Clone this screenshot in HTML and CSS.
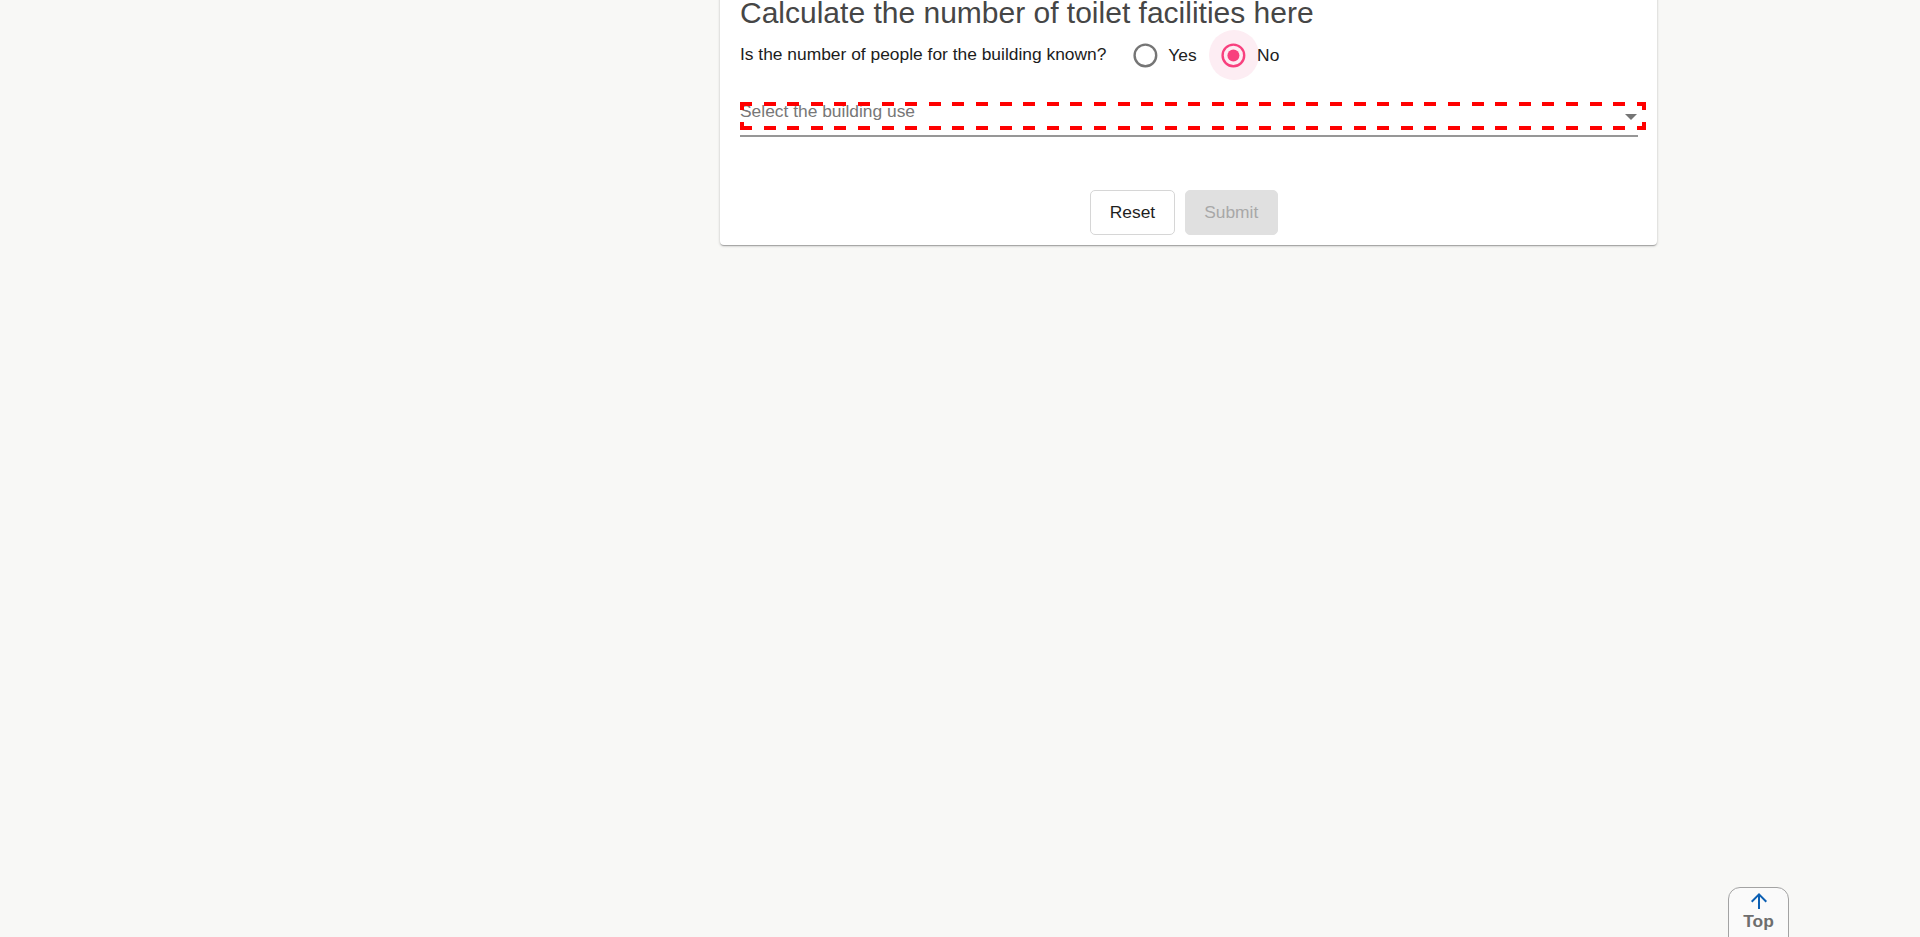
FILE: index.html
```html
<!DOCTYPE html>
<html lang="en">
<head>
<meta charset="utf-8">
<title>Toilet facilities calculator</title>
<link rel="stylesheet" href="styles.css">
</head>
<body>
<div class="layout">
  <div class="side"></div>
  <section class="card">
    <h2 class="title">Calculate the number of toilet facilities here</h2>
    <div class="question-row">
      <span class="question">Is the number of people for the building known?</span>
      <div class="radio-group">
        <label class="radio-option">
          <span class="radio-btn">
            <svg class="radio-icon" viewBox="0 0 24 24" width="28.8" height="28.8"><circle cx="12" cy="12" r="9" fill="none" stroke="#757575" stroke-width="2"/></svg>
          </span>
          <span class="radio-label">Yes</span>
        </label>
        <label class="radio-option">
          <span class="radio-btn checked">
            <svg class="radio-icon" viewBox="0 0 24 24" width="28.8" height="28.8"><circle cx="12" cy="12" r="9" fill="none" stroke="#f8407e" stroke-width="2"/><circle cx="12" cy="12" r="5" fill="#f8407e"/></svg>
          </span>
          <span class="radio-label">No</span>
        </label>
      </div>
    </div>
    <div class="select-field">
      <span class="select-label">Select the building use</span>
      <div class="select-box">
        <svg class="select-arrow" viewBox="0 0 12 6" width="12" height="6"><path d="M0 0 L6 6 L12 0 Z" fill="#757575"/></svg>
      </div>
    </div>
    <div class="actions">
      <button class="btn btn-reset" type="button">Reset</button>
      <button class="btn btn-submit" type="button" disabled>Submit</button>
    </div>
  </section>
</div>
<button class="top-btn" type="button">
  <svg class="top-arrow" viewBox="4 4 16 16" width="16" height="16"><path d="M4 12l1.41 1.41L11 7.83V20h2V7.83l5.58 5.59L20 12l-8-8-8 8z" fill="#0b5fb3"/></svg>
  <span class="top-text">Top</span>
</button>
</body>
</html>
```

FILE: styles.css
```css
html, body {
  margin: 0;
  padding: 0;
  background: #f8f8f6;
  font-family: "Liberation Sans", Arial, sans-serif;
  height: 100%;
  overflow: hidden;
}

.layout {
  display: flex;
  align-items: flex-start;
}

.side {
  flex: 0 0 720px;
}

.card {
  flex: 0 0 937px;
  box-sizing: border-box;
  margin-top: -20px;
  padding: 16px 19px 10px 20px;
  background: #fff;
  border-radius: 4px;
  box-shadow: 0 1px 3px rgba(0,0,0,0.2), 0 1px 1px rgba(0,0,0,0.14), 0 2px 1px -1px rgba(0,0,0,0.12);
}

.title {
  margin: 0;
  font-size: 30px;
  line-height: 34px;
  font-weight: 400;
  color: #464646;
}

.question-row {
  display: flex;
  align-items: center;
  height: 50.4px;
}

.question {
  font-size: 17.4px;
  line-height: 20px;
  color: #1c1c1c;
  margin-bottom: 2px;
}

.radio-group {
  display: flex;
  align-items: center;
  margin-left: 13.5px;
  gap: 12px;
}

.radio-option {
  display: flex;
  align-items: center;
  cursor: pointer;
}

.radio-btn {
  width: 50.4px;
  height: 50.4px;
  border-radius: 50%;
  display: flex;
  align-items: center;
  justify-content: center;
}

.radio-btn.checked {
  background: #fdedf3;
}

.radio-icon {
  display: block;
}

.radio-label {
  font-size: 17.4px;
  line-height: 20px;
  color: #202020;
  margin-left: -2px;
}

.select-field {
  position: relative;
  margin-top: 22px;
  padding-top: 4px;
  padding-bottom: 9px;
  border-bottom: 2px solid #979797;
}

.select-label {
  position: absolute;
  left: 0;
  top: -1px;
  font-size: 17.4px;
  line-height: 20px;
  color: #777;
}

.select-box {
  position: relative;
  height: 20px;
  margin: 0 -4px 0 4px;
  display: flex;
  align-items: center;
  justify-content: flex-end;
  padding-right: 5px;
}

.select-box::after {
  content: "";
  position: absolute;
  top: -4px;
  left: -4px;
  right: -4px;
  bottom: -4px;
  pointer-events: none;
  background:
    repeating-linear-gradient(90deg, #ff0000 0 12px, transparent 12px 23.6px) left top / 100% 4px no-repeat,
    repeating-linear-gradient(90deg, #ff0000 0 12px, transparent 12px 23.6px) left bottom / 100% 4px no-repeat,
    linear-gradient(180deg, #ff0000 0 8px, transparent 8px 20px, #ff0000 20px 28px) left top / 4px 100% no-repeat,
    linear-gradient(180deg, #ff0000 0 8px, transparent 8px 20px, #ff0000 20px 28px) right top / 4px 100% no-repeat;
}

.select-arrow {
  display: block;
  margin-top: 1px;
}

.actions {
  display: flex;
  justify-content: center;
  margin-top: 52.6px;
}

.btn {
  height: 45px;
  margin-right: 10px;
  font-family: "Liberation Sans", Arial, sans-serif;
  font-size: 17.4px;
  border-radius: 5px;
  box-sizing: border-box;
}

.btn-reset {
  background: #fff;
  border: 1px solid #d6d6d6;
  color: #1e1e1e;
  padding: 0 18.5px;
}

.btn-submit {
  background: #e0e0e0;
  border: 1px solid #e0e0e0;
  color: #a8a8a8;
  padding: 0 18.5px;
}

.top-btn {
  position: fixed;
  left: 1728px;
  top: 887px;
  width: 61px;
  height: 62px;
  box-sizing: border-box;
  border: 1px solid #a3a3a3;
  border-radius: 12px;
  background: #fafafa;
  padding: 5px 0 0;
  display: flex;
  flex-direction: column;
  align-items: center;
  font-family: "Liberation Sans", Arial, sans-serif;
}

.top-arrow {
  display: block;
}

.top-text {
  margin-top: 2px;
  font-size: 17.4px;
  line-height: 20px;
  font-weight: 700;
  color: #6e6e6e;
}
```
